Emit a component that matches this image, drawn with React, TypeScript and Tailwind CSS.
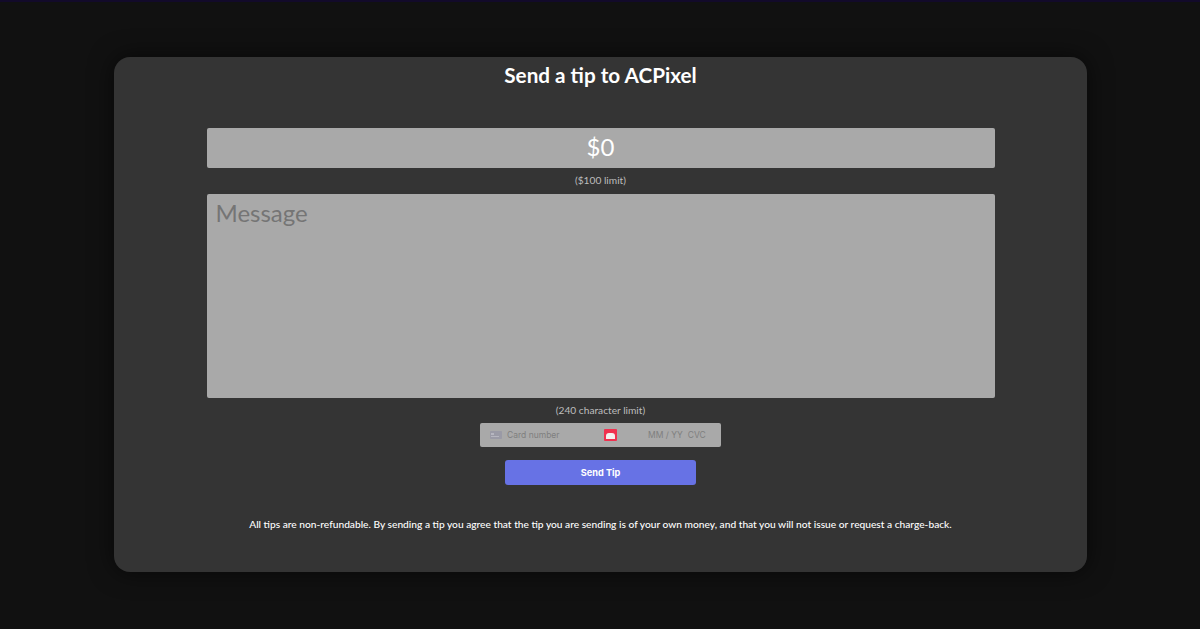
export default function App() {
  return (
    <div className="h-[629px] w-full overflow-hidden bg-[#111111] font-['Inter',sans-serif]">
      <div className="h-[2px] bg-[#120a2a]" />
      <div className="mx-auto mt-[55px] flex h-[515px] w-[973px] flex-col items-center rounded-[16px] bg-[#343434] pt-[5px] pl-[1px] shadow-[0_0_24px_rgba(0,0,0,0.6)]">
        <h1 className="font-['Lato',sans-serif] text-[20.7px] leading-[26px] font-bold text-white">Send a tip to ACPixel</h1>
        <div className="mt-[40px] flex h-[40px] w-[788px] items-center justify-center rounded-[2px] bg-[#a9a9a9] pb-[2px] font-['Lato',sans-serif] text-[24px] text-white">$0</div>
        <p className="mt-[5px] h-[21px] font-['Lato',sans-serif] text-[10.2px] leading-[15px] text-[#bdbdbd]">($100 limit)</p>
        <div className="h-[204px] w-[788px] rounded-[2px] bg-[#a9a9a9] px-[9px] py-[4px] font-['Lato',sans-serif] text-[24px] leading-[29px] text-[#757575]">Message</div>
        <p className="mt-[5px] h-[20px] font-['Lato',sans-serif] text-[10.2px] leading-[15px] text-[#bdbdbd]">(240 character limit)</p>
        <div className="flex h-[24px] w-[241px] items-center rounded-[2px] bg-[#a9a9a9] pl-[10px] text-[8.5px] text-[#7f7f7f]">
          <svg width="12" height="8" viewBox="0 0 12 8" className="shrink-0">
            <rect width="12" height="8" rx="1" fill="#9a9aa6" />
            <rect x="1" y="2" width="3" height="2" fill="#b6b6c0" />
            <rect x="1" y="5" width="8" height="1" fill="#b6b6c0" />
          </svg>
          <span className="ml-[5px] w-[97px]">Card number</span>
          <span className="flex h-[12px] w-[13px] items-end justify-center rounded-[1px] bg-[#f0314f] pb-[2px]">
            <span className="h-[6px] w-[9px] rounded-t-[3px] bg-[#f5f0f0]" />
          </span>
          <span className="ml-[31px]">MM / YY</span>
          <span className="ml-[5px]">CVC</span>
        </div>
        <button className="mt-[13px] flex h-[25px] w-[191px] items-center justify-center rounded-[3px] bg-[#6772e5] text-[9.2px] font-bold text-white">Send Tip</button>
        <p className="mt-[32px] font-['Lato',sans-serif] text-[10.2px] leading-[15px] font-medium text-white">All tips are non-refundable. By sending a tip you agree that the tip you are sending is of your own money, and that you will not issue or request a charge-back.</p>
      </div>
    </div>
  );
}
